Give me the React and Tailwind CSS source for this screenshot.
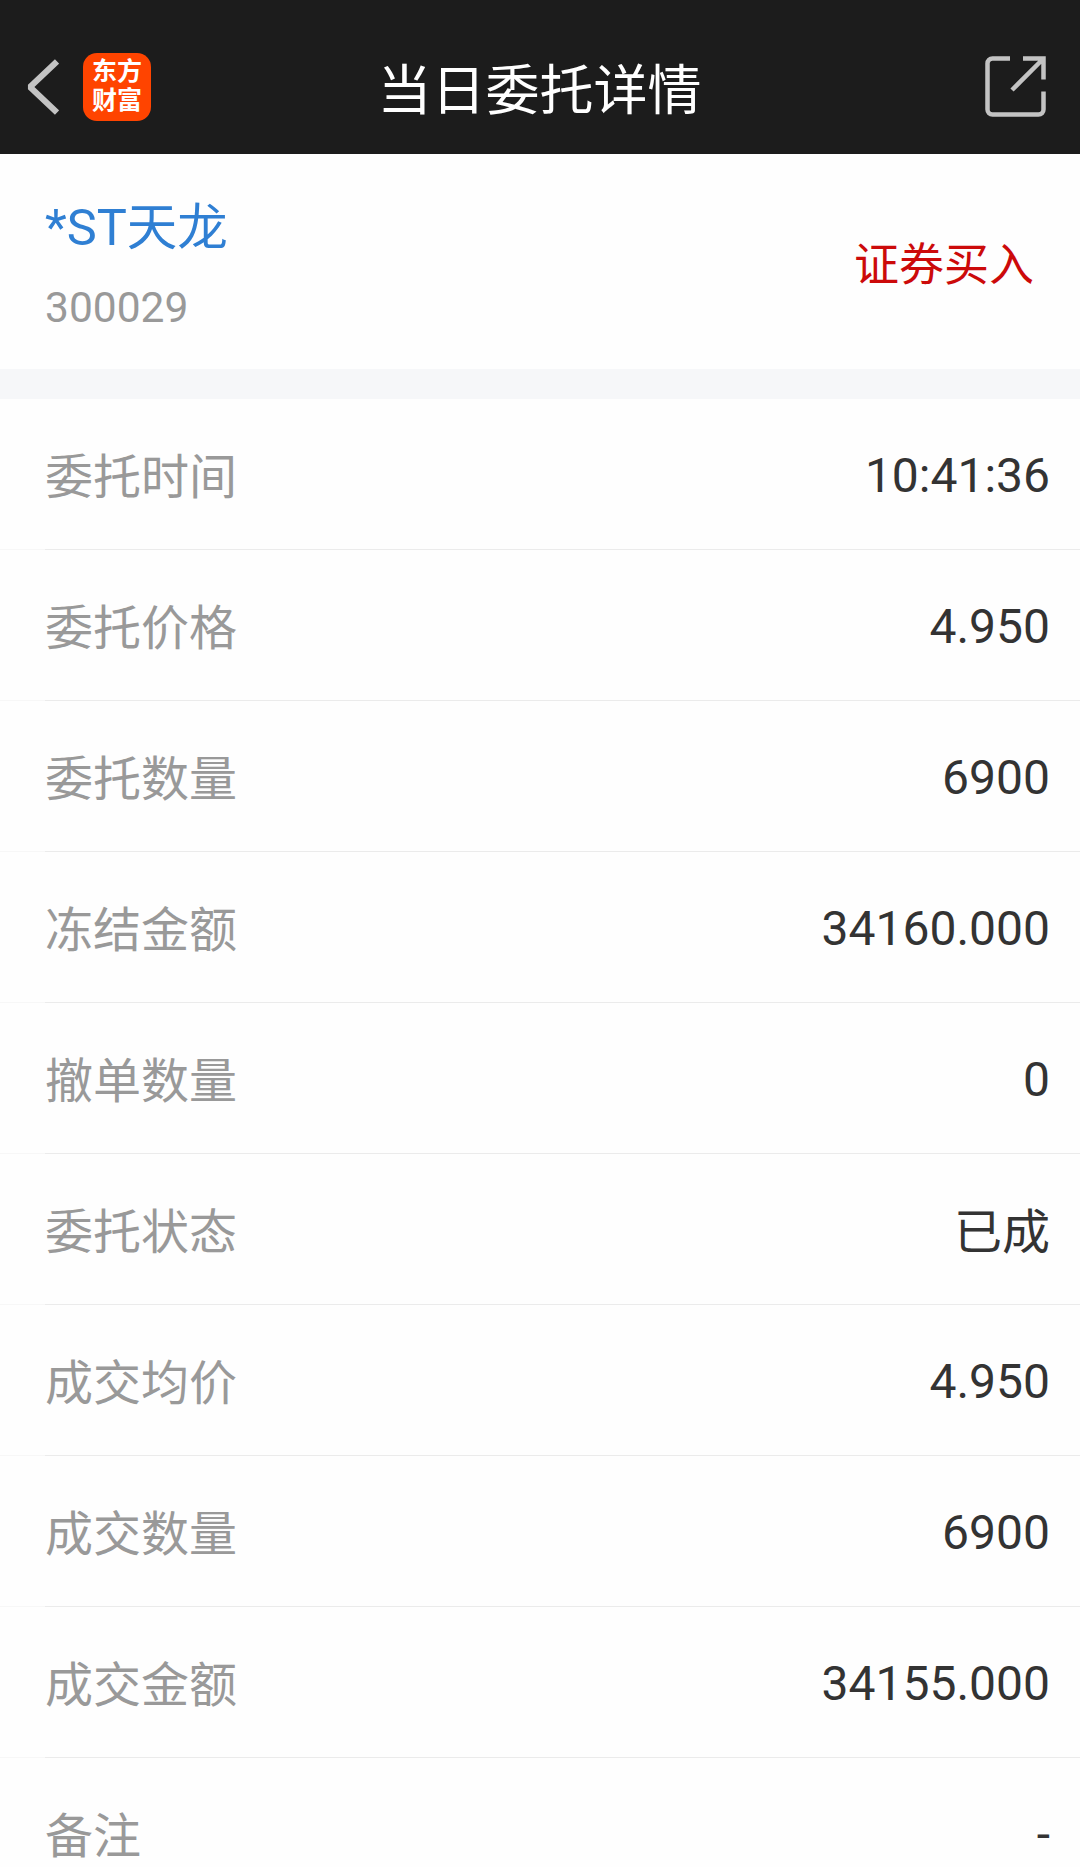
import React from 'react';

const ROWS = [
  { label: '委托时间', value: '10:41:36' },
  { label: '委托价格', value: '4.950' },
  { label: '委托数量', value: '6900' },
  { label: '冻结金额', value: '34160.000' },
  { label: '撤单数量', value: '0' },
  { label: '委托状态', value: '已成' },
  { label: '成交均价', value: '4.950' },
  { label: '成交数量', value: '6900' },
  { label: '成交金额', value: '34155.000' },
  { label: '备注', value: '-' },
];

const Header = () => (
  <header className="flex h-[154px] shrink-0 items-center justify-between bg-[#1c1c1c] pl-[26px] pr-[34px] pt-[19px]">
    <div className="flex w-[126px] items-center gap-[24px]">
      <svg className="h-[56px] w-[33px]" viewBox="0 0 33 56" fill="none" stroke="#c3c3c3" strokeWidth="6" strokeLinejoin="bevel">
        <path d="M31 2.5 4 28 31 53.5" />
      </svg>
      {/* App logo */}
      <div className="flex h-[68px] w-[68px] shrink-0 flex-col items-center justify-center rounded-[14px] bg-[#ff4400] pb-px text-[25px] font-bold leading-[29px] text-white">
        <span>东方</span>
        <span>财富</span>
      </div>
    </div>
    <h1 className="pl-[7px] pt-[10px] text-[54px] leading-[64px] text-white">当日委托详情</h1>
    <div className="flex w-[126px] justify-end">
      <svg className="h-[61px] w-[61px]" viewBox="0 0 61 61" fill="none" stroke="#c3c3c3" strokeWidth="4.5">
        <path d="M25 2.5H7.5a5 5 0 0 0-5 5v46a5 5 0 0 0 5 5h46a5 5 0 0 0 5-5V35.5M38 2.5h20.5v21M58 3 27 34" />
      </svg>
    </div>
  </header>
);

const Row = ({ label, value }) => (
  <div className="flex h-[151px] shrink-0 flex-col">
    <div className="flex flex-1 items-center justify-between pl-[45px] pr-[30px]">
      <span className="pt-[8px] text-[48px] leading-[72px] text-[#999]">{label}</span>
      <span className={`text-[48px] leading-[72px] text-[#333] ${value === '已成' ? 'pt-[8px]' : 'pt-[4px]'}`}>{value}</span>
    </div>
    <div className="flex h-px">
      <div className="w-[45px] bg-[#f7f7f7]" />
      <div className="flex-1 bg-[#ebebeb]" />
    </div>
  </div>
);

const App = () => (
  <div className="flex h-[1867px] w-[1080px] flex-col overflow-hidden bg-[#fefefe] font-['Roboto','Noto_Sans_CJK_SC',sans-serif]">
    <Header />
    <section className="flex h-[215px] shrink-0 items-center justify-between pl-[45px] pr-[46px]">
      <div className="pt-[10px]">
        <h2 className="text-[50.5px] leading-[81px] text-[#2f7fd3]">*ST天龙</h2>
        <p className="text-[42.5px] leading-[79px] text-[#999]">300029</p>
      </div>
      <span className="pt-[9px] text-[45px] text-[#cc0a0a]">证券买入</span>
    </section>
    <div className="h-[30px] shrink-0 bg-[#f6f7f9]" />
    {ROWS.map((row) => (
      <Row key={row.label} {...row} />
    ))}
  </div>
);

export default App;
